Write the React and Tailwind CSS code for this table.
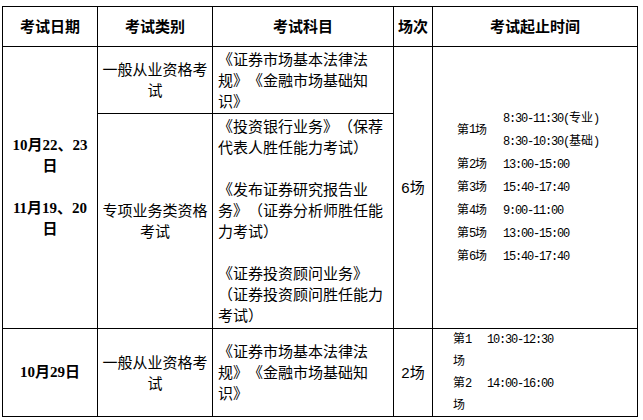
const sans = "font-['Liberation_Sans','Noto_Sans_CJK_SC',sans-serif]";

function M({ children }) {
  return (
    <span className="font-['Liberation_Mono','Noto_Sans_CJK_SC',monospace] tracking-[-1.2px]">
      {children}
    </span>
  );
}

function Cell({ className = "", children }) {
  return <div className={`flex items-center bg-white ${className}`}>{children}</div>;
}

function Head({ children }) {
  return (
    <Cell className="justify-center text-center font-bold">{children}</Cell>
  );
}

function Subjects({ items }) {
  return (
    <Cell className="pl-[5px] pr-[4px]">
      <div className="w-full">
        {items.map((text, i) => (
          <p key={i} className={i > 0 ? "mt-[21px]" : ""}>
            {text}
          </p>
        ))}
      </div>
    </Cell>
  );
}

const sessionsA = [
  ["2", "13:00-15:00"],
  ["3", "15:40-17:40"],
  ["4", "9:00-11:00"],
  ["5", "13:00-15:00"],
  ["6", "15:40-17:40"],
];

export default function App() {
  return (
    <div className={`min-h-[420px] bg-white pt-[6px] pl-[2px] text-[15px] leading-[21px] text-black [text-spacing-trim:space-all] ${sans}`}>
      <div className="grid w-[636px] grid-cols-[94px_114px_180px_38px_204px] grid-rows-[39px_66px_214px_87px] gap-px bg-black p-px">
        <Head>考试日期</Head>
        <Head>考试类别</Head>
        <Head>考试科目</Head>
        <Head>场次</Head>
        <Head>考试起止时间</Head>

        <Cell className="row-span-2 justify-center px-[6px] text-center font-bold font-['Liberation_Serif','Noto_Sans_CJK_SC',serif]">
          <div>
            <p>10月22、23日</p>
            <p className="mt-[21px]">11月19、20日</p>
          </div>
        </Cell>
        <Cell className="justify-center px-[3px] text-center">一般从业资格考试</Cell>
        <Subjects items={["《证券市场基本法律法规》《金融市场基础知识》"]} />
        <Cell className="row-span-2 justify-center">6场</Cell>
        <Cell className="row-span-2 text-[12px] leading-[22px]">
          <div className="grid grid-cols-[46px_auto] pl-[24px]">
            <div className="row-span-2 flex items-center">
              第<M>1</M>场
            </div>
            <div>
              <M>8:30-11:30(</M>专业<M>)</M>
            </div>
            <div>
              <M>8:30-10:30(</M>基础<M>)</M>
            </div>
            {sessionsA.map(([n, t]) => (
              <div key={n} className="contents">
                <div>
                  第<M>{n}</M>场
                </div>
                <div>
                  <M>{t}</M>
                </div>
              </div>
            ))}
          </div>
        </Cell>

        <Cell className="justify-center px-[3px] text-center">专项业务类资格考试</Cell>
        <Subjects
          items={[
            "《投资银行业务》（保荐代表人胜任能力考试）",
            "《发布证券研究报告业务》（证券分析师胜任能力考试）",
            "《证券投资顾问业务》（证券投资顾问胜任能力考试）",
          ]}
        />

        <Cell className="justify-center px-[6px] font-bold font-['Liberation_Serif','Noto_Sans_CJK_SC',serif]">
          10月29日
        </Cell>
        <Cell className="justify-center px-[3px] text-center">一般从业资格考试</Cell>
        <Subjects items={["《证券市场基本法律法规》《金融市场基础知识》"]} />
        <Cell className="justify-center">2场</Cell>
        <Cell className="text-[12px] leading-[21.5px]">
          <div className="grid grid-cols-[34px_auto] pl-[20px]">
            <div>
              第<M>1</M>
              <br />
              场
            </div>
            <div>
              <M>10:30-12:30</M>
            </div>
            <div>
              第<M>2</M>
              <br />
              场
            </div>
            <div>
              <M>14:00-16:00</M>
            </div>
          </div>
        </Cell>
      </div>
    </div>
  );
}
